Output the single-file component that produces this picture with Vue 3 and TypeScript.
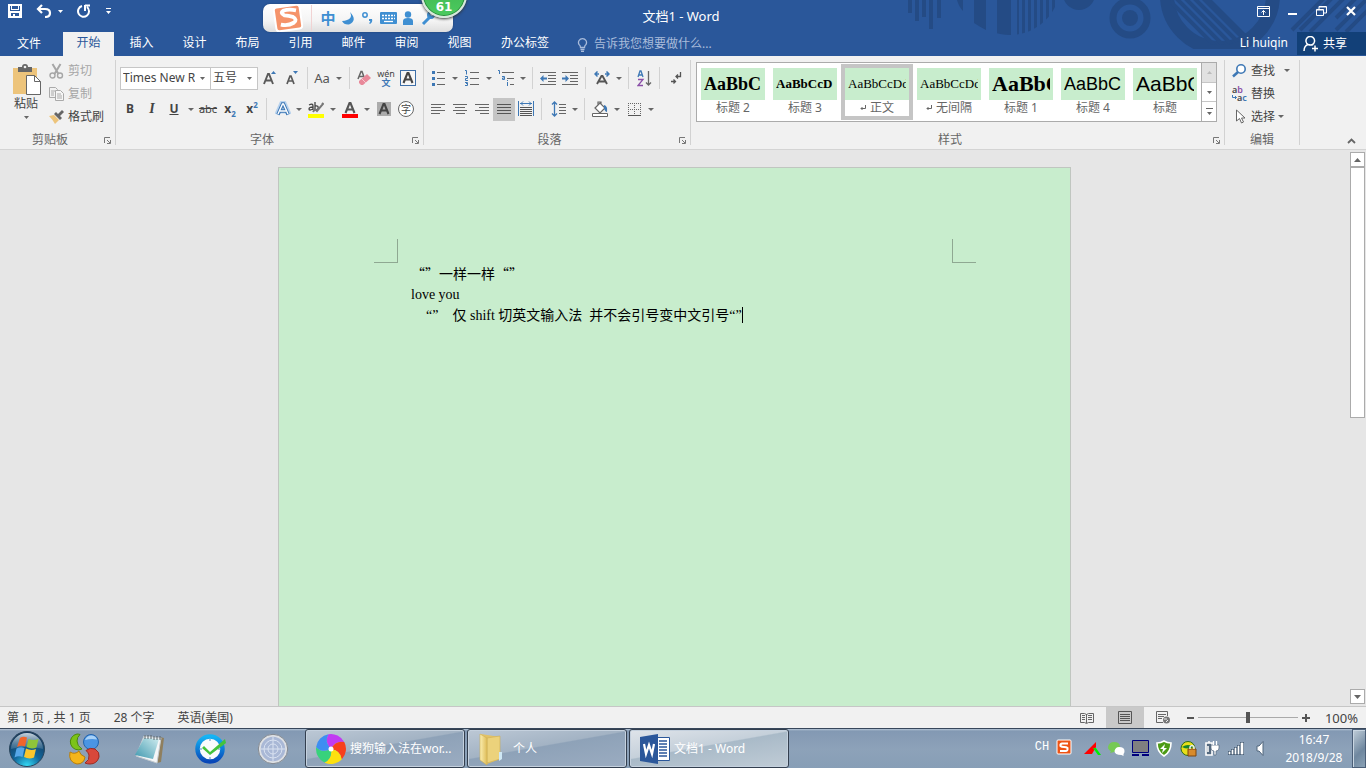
<script setup lang="ts">
import { ref } from 'vue'

interface StylePreset {
  sample: string
  name: string
  look: string
  mark?: boolean
}

const tabs: string[] = ['开始', '插入', '设计', '布局', '引用', '邮件', '审阅', '视图', '办公标签']
const activeTab = ref('开始')
const selectedStyle = ref('正文')
const zoom = ref(50)
const fontName = ref('Times New Roman')
const fontSize = ref('五号')
const query = ref('')
const lastLine = '“”    仅 shift 切英文输入法  并不会引号变中文引号“”'

const presets: StylePreset[] = [
  { sample: 'AaBbC', name: '标题 2', look: 'look-h2' },
  { sample: 'AaBbCcD', name: '标题 3', look: 'look-h3' },
  { sample: 'AaBbCcDd', name: '正文', look: 'look-body', mark: true },
  { sample: 'AaBbCcDd', name: '无间隔', look: 'look-body', mark: true },
  { sample: 'AaBbC', name: '标题 1', look: 'look-h1' },
  { sample: 'AaBbC', name: '标题 4', look: 'look-h4' },
  { sample: 'AaBbC', name: '标题', look: 'look-title' },
]
</script>

<template>
  <div class="app">
    <header class="head">
      <svg class="deco" width="470" height="56" viewBox="896 0 470 56" aria-hidden="true">
        <defs>
          <clipPath id="discA"><circle cx="1010" cy="-15" r="50" /></clipPath>
          <clipPath id="discB"><circle cx="1220" cy="-5" r="50" /></clipPath>
          <clipPath id="flat"><rect x="1150" y="0" width="216" height="49" /></clipPath>
        </defs>
        <g fill="#244b85">
          <path d="M908 0h4v13h-4zM915 0h4v21h-4zM922 0h4v17h-4zM929 0h4v29h-4zM937 0h4v18h-4z" />
          <path d="M957 0h6v11q-4-4-6-11zM974 0h12v30q-6-3-12-7z" />
          <g clip-path="url(#discA)">
            <path d="M997 0h14v40h-14zM1017 0h2v40h-2zM1022 0h3v40h-3zM1028 0h3v40h-3zM1034 0h3v40h-3zM1040 0h3v40h-3zM1046 0h3v40h-3zM1052 0h3v40h-3z" />
          </g>
          <circle cx="1079" cy="-6" r="16" />
          <circle cx="1130" cy="18" r="8" />
        </g>
        <circle cx="1130" cy="18" r="17" fill="none" stroke="#244b85" stroke-width="7" />
        <g clip-path="url(#flat)">
          <circle cx="1220" cy="-5" r="53" fill="none" stroke="#244b85" stroke-width="14" />
          <g clip-path="url(#discB)">
            <path d="M1165-4l56 56M1174-4l56 56M1183-4l56 56M1192-4l56 56" stroke="#244b85" stroke-width="4" />
            <path d="M1203-4l56 56" stroke="#244b85" stroke-width="7" />
          </g>
          <path d="M1292 30l34-34M1300 30l36-36M1310 32l44-44M1336 18l30-30M1336 30l30-30M1346 32l24-24" stroke="#244b85" stroke-width="4" />
        </g>
      </svg>

      <div class="titlebar">
        <div class="quick">
          <button class="qbtn" aria-label="保存">
            <svg width="14" height="14" viewBox="0 0 14 14"><path d="M0 0h14v14H0z" fill="#fff" /><path d="M2 2h1v4h8V2h1v5H2zM3 9h8v3H7v-2H5v2H3z" fill="#2a579a" /><path d="M4 2h6v3H4z" fill="#2a579a" /></svg>
          </button>
          <button class="qbtn undo" aria-label="撤消">
            <svg width="16" height="14" viewBox="0 0 16 14"><path d="M6 1L2 5l4 4M2 5h7q5 0 5 4t-5 4" fill="none" stroke="#fff" stroke-width="2.200" /></svg>
          </button>
          <button class="qcaret" aria-label="撤消选项"><svg width="5" height="3" viewBox="0 0 5 3"><path d="M0 0h5L2.500 3z" fill="#fff" /></svg></button>
          <button class="qbtn" aria-label="重做">
            <svg width="14" height="14" viewBox="0 0 14 14"><path d="M5 2a5.500 5.500 0 1 0 5 1M8 1v6M8 1.500h5" fill="none" stroke="#fff" stroke-width="2" /></svg>
          </button>
          <button class="qbtn" aria-label="自定义快速访问工具栏">
            <svg width="5" height="7" viewBox="0 0 5 7"><path d="M0 0h5v1H0zM0 3h5L2.500 6z" fill="#fff" /></svg>
          </button>
        </div>
        <h1 class="title">文档1 - Word</h1>
        <div class="winbtns">
          <button aria-label="功能区显示选项"><svg width="13" height="11" viewBox="0 0 13 11"><path d="M.5.500h12v10H.500zM.5 2.500h12M6.500 9V4.500M4.500 6.500l2-2 2 2" fill="none" stroke="#fff" /></svg></button>
          <button aria-label="最小化"><svg width="9" height="11" viewBox="0 0 9 11"><path d="M0 7h9v2H0z" fill="#fff" /></svg></button>
          <button aria-label="还原"><svg width="11" height="10" viewBox="0 0 11 10"><path d="M.5 3.500h7v6h-7zM.5 4h7M3 3V.500h7.500V7H8M3 1h7" fill="none" stroke="#fff" /></svg></button>
          <button aria-label="关闭"><svg width="10" height="10" viewBox="0 0 10 10"><path d="M1 1l8 8M9 1L1 9" stroke="#fff" stroke-width="2.200" /></svg></button>
        </div>
      </div>

      <nav class="tabs">
        <button class="tab file">文件</button>
        <button v-for="t in tabs" :key="t" class="tab" :class="{ active: t === activeTab }" @click="activeTab = t">{{ t }}</button>
        <label class="tell">
          <svg width="11" height="15" viewBox="0 0 11 15"><path d="M3.500 10.500q0-2-1.500-3a4 4 0 1 1 7 0q-1.500 1-1.500 3zM3.500 12.500h4M4 14.500h3" fill="none" stroke="#a9bcdb" stroke-width="1.300" /></svg>
          <input v-model="query" type="text" aria-label="告诉我您想要做什么" placeholder="告诉我您想要做什么..." />
        </label>
        <a class="user" href="#">Li huiqin</a>
        <button class="share">
          <svg width="16" height="16" viewBox="0 0 16 16"><path d="M1 15q0-5 4-6.500A4.300 4.300 0 1 1 9.500 8.500M5 8.500q3 1 5 0M9 12.500h6M12 9.500v6" fill="none" stroke="#fff" stroke-width="1.500" /></svg>
          共享
        </button>
      </nav>
    </header>

    <aside class="ime" aria-label="搜狗输入法">
      <svg class="ime-logo" width="30" height="28" viewBox="0 0 30 28"><g transform="rotate(-8 15 14)"><rect x="2" y="2" width="26" height="24" rx="3" fill="#f5936a" stroke="#fff" stroke-width="2" /><path d="M24 7.500q-7-2.500-12-1.500-5 2 0 5 4 1 8 2.500 4.500 3.500 0 6-6 2.500-13 0" fill="none" stroke="#fff" stroke-width="3.800" /></g></svg>
      <span class="ime-line"></span>
      <span class="ime-cn">中</span>
      <svg width="20" height="18" viewBox="0 0 20 18"><path d="M12 3q4 8-8 9 2 4 7 3.500 9-4 1-12.500z" fill="#3f8fd2" /></svg>
      <svg width="20" height="18" viewBox="0 0 20 18"><circle cx="7" cy="6" r="2.200" fill="none" stroke="#3f8fd2" stroke-width="1.500" /><path d="M11 10h3q1 3-2 5l-1-1q2-1 1-2h-1z" fill="#3f8fd2" /></svg>
      <svg width="20" height="18" viewBox="0 0 20 18"><rect x="2" y="3" width="17" height="12" rx="1" fill="#3f8fd2" /><path d="M4 6.500h13M4 9.500h13" stroke="#fff" stroke-width="1.500" stroke-dasharray="2 1" /><path d="M6 12.500h9" stroke="#fff" stroke-width="1.300" /></svg>
      <svg width="20" height="18" viewBox="0 0 20 18"><circle cx="10" cy="5.500" r="3.200" fill="#3f8fd2" /><path d="M5 12q0-3 5-3t5 3v4H5z" fill="#3f8fd2" /></svg>
      <svg width="20" height="18" viewBox="0 0 20 18"><path d="M5 15l7-7" stroke="#3f8fd2" stroke-width="3" /><path d="M14 2q-5 0-5 4 0 4 4 4 4 0 4-5l-3 2-2-2z" fill="#3f8fd2" /></svg>
      <span class="ball">61</span>
    </aside>

    <section class="ribbon" aria-label="功能区">
      <div class="group g-clip">
        <div class="clip-body">
          <button class="paste">
            <svg width="29" height="31" viewBox="0 0 29 31"><path d="M1 4h24v26H1z" fill="#edc47b" /><path d="M6 8V3h4q0-3 3-3t3 3h4v5z" fill="#666" /><circle cx="13" cy="3" r="1.300" fill="#f1f1f1" /><path d="M14.500 11.500h8l6 6v13h-14z" fill="#fff" stroke="#666" /><path d="M22.500 11.500v6h6" fill="none" stroke="#666" /></svg>
            <span>粘贴</span>
            <svg width="5" height="3" viewBox="0 0 5 3"><path d="M0 0h5L2.500 3z" fill="#666" /></svg>
          </button>
          <div class="clip-side">
            <button class="side dim"><svg width="15" height="16" viewBox="0 0 15 16"><path d="M3.500 1l6 10M11.500 1l-6 10" stroke="#a6a6a6" stroke-width="2" /><circle cx="3.500" cy="12.500" r="2.500" fill="none" stroke="#a6a6a6" stroke-width="1.400" /><circle cx="11" cy="12.500" r="2.500" fill="none" stroke="#a6a6a6" stroke-width="1.400" /></svg>剪切</button>
            <button class="side dim"><svg width="15" height="14" viewBox="0 0 15 14"><path d="M.5.500h6l2 2v8h-8zM2 4h4M2 6h3M2 8h3" fill="none" stroke="#aaa" /><path d="M6.500 3.500h5l3 3v7h-8z" fill="#f6f6f6" stroke="#aaa" /><path d="M8 7h4M8 9h5M8 11h5" stroke="#aaa" /></svg>复制</button>
            <button class="side"><svg width="15" height="14" viewBox="0 0 15 14"><path d="M0 6l5-1 5 5-4 4q-2-4-6-8z" fill="#edc47b" /><path d="M5 4l2-2 2 2 4-4 2 2-4 4 2 2-2 2z" fill="#666" /></svg>格式刷</button>
          </div>
        </div>
        <div class="cap"><span>剪贴板</span><button class="launch" aria-label="剪贴板选项"><svg width="7" height="7" viewBox="0 0 7 7"><path d="M.5 6V.500H6M3 3l3 3M6.500 3v3.500H3" fill="none" stroke="#777" /></svg></button></div>
      </div>

      <div class="group g-font">
        <div class="rows">
          <div class="row">
            <span class="combo name"><select v-model="fontName" aria-label="字体"><option>Times New Roman</option><option>宋体</option></select><svg width="5" height="3" viewBox="0 0 5 3"><path d="M0 0h5L2.500 3z" fill="#666" /></svg></span>
            <span class="combo size"><select v-model="fontSize" aria-label="字号"><option>五号</option><option>四号</option></select><svg width="5" height="3" viewBox="0 0 5 3"><path d="M0 0h5L2.500 3z" fill="#666" /></svg></span>
            <button class="t" aria-label="增大字号"><svg width="14" height="16" viewBox="0 0 14 16"><path d="M1 14L5 4h1l4 10M2.500 10.500h6" fill="none" stroke="#595959" stroke-width="1.900" /><path d="M8 4l2.500-3L13 4z" fill="#3e78b5" /></svg></button>
            <button class="t" aria-label="减小字号"><svg width="14" height="16" viewBox="0 0 14 16"><path d="M2 14l3-8h1l3 8M3 11h5" fill="none" stroke="#595959" stroke-width="1.700" /><path d="M8 1h5l-2.500 3z" fill="#3e78b5" /></svg></button>
            <i class="sep"></i>
            <button class="t aa" aria-label="更改大小写">Aa</button>
            <button class="dd" aria-label="大小写选项"></button>
            <i class="sep"></i>
            <button class="t" aria-label="清除所有格式"><svg width="16" height="16" viewBox="0 0 16 16"><path d="M2 9l3-7.500h1L8 7M3.500 6.500h4" fill="none" stroke="#666" stroke-width="1.500" /><path d="M3 11l8-7 4 4-8 7H5l-2-2z" fill="#e8899a" /><path d="M6 9l4 4" stroke="#f7c8d0" /></svg></button>
            <button class="t wen" aria-label="拼音指南"><span>wén</span><b>文</b></button>
            <button class="t" aria-label="字符边框"><svg width="16" height="16" viewBox="0 0 16 16"><rect x=".5" y=".5" width="15" height="15" fill="#f6f6f6" stroke="#3e6fa8" /><path d="M3.500 13L7.500 3h1l4 10M5 9.500h6" fill="none" stroke="#444" stroke-width="2.100" /></svg></button>
          </div>
          <div class="row">
            <button class="t bold">B</button>
            <button class="t ital">I</button>
            <button class="t under">U</button>
            <button class="dd" aria-label="下划线选项"></button>
            <button class="t strike">abc</button>
            <button class="t sc">x<sub>2</sub></button>
            <button class="t sc">x<sup>2</sup></button>
            <i class="sep"></i>
            <button class="t fx" aria-label="文本效果"><svg width="16" height="16" viewBox="0 0 16 16"><path d="M2 13.500L7 2h2l5 11.500M4 10h8" fill="none" stroke="#b9d3ee" stroke-width="5" stroke-linejoin="round" /><path d="M3 13.500L7.500 3h1L13 13.500M5 10h6" fill="none" stroke="#3e78b5" stroke-width="3.500" /><path d="M3 13L7.500 3h1L13 13M5 10h6" fill="none" stroke="#fff" stroke-width="1.400" /></svg></button>
            <button class="dd" aria-label="文本效果选项"></button>
            <button class="t" aria-label="突出显示"><svg width="16" height="17" viewBox="0 0 16 17"><path d="M1 4q4-2 4 1v4M5 6Q1 6 1 8t4 0M7 1v8M7 5q4-1 3 3l-3 1" fill="none" stroke="#444" stroke-width="1.300" /><path d="M5 11l2-3 2 2 6-7-1-1" fill="none" stroke="#777" stroke-width="2" /><path d="M0 13h16v4H0z" fill="#ff0" /></svg></button>
            <button class="dd" aria-label="突出显示选项"></button>
            <button class="t" aria-label="字体颜色"><svg width="16" height="17" viewBox="0 0 16 17"><path d="M3.500 12L7.500 2h1l4 10M5 8.500h6" fill="none" stroke="#555" stroke-width="2.100" /><path d="M0 13h16v4H0z" fill="#f00" /></svg></button>
            <button class="dd" aria-label="字体颜色选项"></button>
            <button class="t" aria-label="字符底纹"><svg width="14" height="14" viewBox="0 0 14 14"><path d="M0 0h14v14H0z" fill="#acacac" /><path d="M2.500 12l4-10h1l4 10M4 8.500h6" fill="none" stroke="#444" stroke-width="2.100" /></svg></button>
            <button class="t" aria-label="带圈字符"><span class="ring">字</span></button>
          </div>
        </div>
        <div class="cap"><span>字体</span><button class="launch" aria-label="字体选项"><svg width="7" height="7" viewBox="0 0 7 7"><path d="M.5 6V.500H6M3 3l3 3M6.500 3v3.500H3" fill="none" stroke="#777" /></svg></button></div>
      </div>

      <div class="group g-para">
        <div class="rows">
          <div class="row">
            <button class="t" aria-label="项目符号"><svg width="14" height="16" viewBox="0 0 14 16"><path d="M1 1h3v3H1zM1 7h3v3H1zM1 13h3v3H1z" fill="#3e78b5" /><path d="M6 2.500h8M6 8.500h8M6 14.500h8" stroke="#666" /></svg></button>
            <button class="dd" aria-label="项目符号选项"></button>
            <button class="t" aria-label="编号"><svg width="14" height="16" viewBox="0 0 14 16"><path d="M0 .500h1.500v4M0 6.500h2.500v2H.500v2H3M0 12.500h2.500v3H0M1 13.500h1" fill="none" stroke="#3e78b5" /><path d="M5 2.500h9M5 8.500h9M5 14.500h9" stroke="#666" /></svg></button>
            <button class="dd" aria-label="编号选项"></button>
            <button class="t" aria-label="多级列表"><svg width="17" height="16" viewBox="0 0 17 16"><path d="M0 .500h1.500V4M4 6.500h2.500v3H4.500v-1.500h2M9.500 10v1M9.500 12v4" fill="none" stroke="#3e78b5" /><path d="M4 2.500h12M9 8.500h7M12 14.500h4" stroke="#666" /></svg></button>
            <button class="dd" aria-label="多级列表选项"></button>
            <i class="sep"></i>
            <button class="t" aria-label="减少缩进量"><svg width="16" height="13" viewBox="0 0 16 13"><path d="M0 .500h16M8 3.500h8M8 6.500h8M8 9.500h8M0 12.500h16" stroke="#666" /><path d="M0 6.500l3.500-3.500V5.500H7v2H3.500V10z" fill="#3e78b5" /></svg></button>
            <button class="t" aria-label="增加缩进量"><svg width="16" height="13" viewBox="0 0 16 13"><path d="M0 .500h16M8 3.500h8M8 6.500h8M8 9.500h8M0 12.500h16" stroke="#666" /><path d="M7 6.500L3.500 3v2.500H0v2h3.500V10z" fill="#3e78b5" /></svg></button>
            <i class="sep wide"></i>
            <button class="t" aria-label="中文版式"><svg width="16" height="14" viewBox="0 0 16 14"><path d="M3 13L7.500 5h1L13 13M5 10.500h6" fill="none" stroke="#555" stroke-width="1.900" /><path d="M5 3H1m2.500-2.500L1 3l2.500 2.500M11 3h4m-2.500-2.500L15 3l-2.500 2.500" fill="none" stroke="#3e78b5" stroke-width="1.500" /></svg></button>
            <button class="dd" aria-label="中文版式选项"></button>
            <i class="sep"></i>
            <button class="t" aria-label="排序"><svg width="15" height="17" viewBox="0 0 15 17"><path d="M1 7l2-6h1l2 6M2 5h3" fill="none" stroke="#3e78b5" stroke-width="1.300" /><path d="M1 9.500h5l-5 6h5" fill="none" stroke="#8a4fa8" stroke-width="1.300" /><path d="M11.500 1v14M9 12.500l2.500 2.500 2.500-2.500" fill="none" stroke="#666" stroke-width="1.300" /></svg></button>
            <i class="sep wide"></i>
            <button class="t" aria-label="显示编辑标记"><svg width="11" height="13" viewBox="0 0 11 13"><path d="M9.500 0v4.500H5M7 2.500l-2 2 2 2M0 9.500h4.500M2.500 7.500l2 2-2 2" fill="none" stroke="#555" stroke-width="1.300" /></svg></button>
          </div>
          <div class="row">
            <button class="t" aria-label="左对齐"><svg width="14" height="10" viewBox="0 0 14 10"><path d="M0 .500h14M0 3.500h10M0 6.500h14M0 9.500h9" stroke="#666" /></svg></button>
            <button class="t" aria-label="居中"><svg width="14" height="10" viewBox="0 0 14 10"><path d="M0 .500h14M2 3.500h10M0 6.500h14M3 9.500h9" stroke="#666" /></svg></button>
            <button class="t" aria-label="右对齐"><svg width="14" height="10" viewBox="0 0 14 10"><path d="M0 .500h14M4 3.500h10M0 6.500h14M5 9.500h9" stroke="#666" /></svg></button>
            <button class="t pressed" aria-label="两端对齐"><svg width="14" height="10" viewBox="0 0 14 10"><path d="M0 .500h14M0 3.500h14M0 6.500h14M0 9.500h14" stroke="#555" /></svg></button>
            <button class="t" aria-label="分散对齐"><svg width="16" height="16" viewBox="0 0 16 16"><path d="M.5 0v15M15.500 0v15M2 2.500h12M5 .500l-2 2 2 2M11 .500l2 2-2 2" fill="none" stroke="#3e78b5" /><path d="M2 6.500h12M2 8.500h12M2 10.500h12M2 12.500h12M2 14.500h12" stroke="#555" /></svg></button>
            <i class="sep wide"></i>
            <button class="t" aria-label="行距"><svg width="15" height="16" viewBox="0 0 15 16"><path d="M3.500 1v14M1 3.500L3.500 1 6 3.500M1 12.500L3.500 15 6 12.500" fill="none" stroke="#3e78b5" stroke-width="1.300" /><path d="M8 3.500h7M8 6.500h7M8 9.500h7M8 12.500h7" stroke="#666" /></svg></button>
            <button class="dd" aria-label="行距选项"></button>
            <i class="sep"></i>
            <button class="t" aria-label="底纹"><svg width="17" height="16" viewBox="0 0 17 16"><path d="M3 7l5-5 5 5-5 5zM6 5V1h3v3" fill="#fff" stroke="#666" stroke-width="1.200" /><path d="M12 4q4 1 3 7-2 0-3-4z" fill="#3e78b5" /><path d="M.5 12.500h15v3H.500z" fill="#fff" stroke="#666" /></svg></button>
            <button class="dd" aria-label="底纹选项"></button>
            <button class="t" aria-label="边框"><svg width="13" height="13" viewBox="0 0 13 13"><path d="M0 .500h13M0 6.500h13M.5 0v12M6.500 0v12M12.500 0v12" fill="none" stroke="#666" stroke-dasharray="1 1" /><path d="M0 12.500h13" stroke="#555" /></svg></button>
            <button class="dd" aria-label="边框选项"></button>
          </div>
        </div>
        <div class="cap"><span>段落</span><button class="launch" aria-label="段落选项"><svg width="7" height="7" viewBox="0 0 7 7"><path d="M.5 6V.500H6M3 3l3 3M6.500 3v3.500H3" fill="none" stroke="#777" /></svg></button></div>
      </div>

      <div class="group g-style">
        <div class="gallery">
          <button v-for="p in presets" :key="p.name" class="preset" :class="{ chosen: p.name === selectedStyle }" @click="selectedStyle = p.name">
            <span class="sample" :class="p.look"><span>{{ p.sample }}</span></span>
            <span class="pname"><svg v-if="p.mark" width="6" height="6" viewBox="0 0 6 6"><path d="M5.500 0v3.500H1M2.500 2L1 3.500 2.500 5" fill="none" stroke="#666" /></svg>{{ p.name }}</span>
          </button>
          <div class="gscroll">
            <button class="off" aria-label="上一行"><svg width="5" height="3" viewBox="0 0 5 3"><path d="M0 3h5L2.500 0z" fill="#bbb" /></svg></button>
            <button aria-label="下一行"><svg width="5" height="3" viewBox="0 0 5 3"><path d="M0 0h5L2.500 3z" fill="#666" /></svg></button>
            <button aria-label="其他样式"><svg width="7" height="7" viewBox="0 0 7 7"><path d="M0 0h7v1H0zM1 4h5L3.500 7z" fill="#666" /></svg></button>
          </div>
        </div>
        <div class="cap"><span>样式</span><button class="launch" aria-label="样式选项"><svg width="7" height="7" viewBox="0 0 7 7"><path d="M.5 6V.500H6M3 3l3 3M6.500 3v3.500H3" fill="none" stroke="#777" /></svg></button></div>
      </div>

      <div class="group g-edit">
        <div class="edit-body">
          <button class="side"><svg width="16" height="14" viewBox="0 0 16 14"><path d="M6 8l-5 4.500" stroke="#3e78b5" stroke-width="2.500" /><circle cx="9" cy="5" r="4.200" fill="#fff" stroke="#3e78b5" stroke-width="1.600" /></svg>查找<i class="arr far"></i></button>
          <button class="side"><span class="abac"><b>a<em>b</em></b><b><svg width="5" height="5" viewBox="0 0 5 5"><path d="M.5 0v2.500h4M3 1l1.500 1.500L3 4" fill="none" stroke="#3e78b5" /></svg>a<u>c</u></b></span>替换</button>
          <button class="side"><svg width="16" height="15" viewBox="0 0 16 15"><path d="M4.500 1v11l3-2.500 2 4.500 2-1-2-4h3.500z" fill="#fff" stroke="#666" /></svg>选择<i class="arr"></i></button>
        </div>
        <div class="cap"><span>编辑</span></div>
      </div>
      <button class="collapse" aria-label="折叠功能区"><svg width="9" height="6" viewBox="0 0 9 6"><path d="M1 5l3.500-3.500L8 5" fill="none" stroke="#666" stroke-width="1.800" /></svg></button>
    </section>

    <main class="work">
      <div class="canvas">
        <article class="page" lang="zh-CN">
          <div class="marks"><i class="mk left"></i><i class="mk right"></i></div>
          <div class="copy">
            <p class="full">“”一样一样“”</p>
            <p>love you</p>
            <p class="indent">{{ lastLine }}<i class="cursor"></i></p>
          </div>
        </article>
      </div>
      <div class="vbar">
        <button aria-label="向上滚动"><svg width="7" height="4" viewBox="0 0 7 4"><path d="M0 4h7L3.500 0z" fill="#666" /></svg></button>
        <div class="track"><div class="thumb"></div></div>
        <button aria-label="向下滚动"><svg width="7" height="4" viewBox="0 0 7 4"><path d="M0 0h7L3.500 4z" fill="#666" /></svg></button>
      </div>
    </main>

    <footer class="status">
      <span>第 1 页 , 共 1 页</span><span>28 个字</span><span>英语(美国)</span>
      <div class="views">
        <button aria-label="阅读视图"><svg width="14" height="12" viewBox="0 0 14 12"><path d="M.5 1.500h4l2 1 2-1h5v9h-5l-2 1-2-1h-4zM6.500 2v9M2 3.500h3M2 5.500h3M2 7.500h3M8 3.500h4M8 5.500h4M8 7.500h4" fill="none" stroke="#666" /></svg></button>
        <button class="on" aria-label="页面视图"><svg width="14" height="13" viewBox="0 0 14 13"><path d="M.5.500h13v12H.500zM2 3.500h10M2 5.500h10M2 7.500h10M2 9.500h10" fill="none" stroke="#555" /></svg></button>
        <button aria-label="Web 版式视图"><svg width="15" height="13" viewBox="0 0 15 13"><path d="M7 11.500H.500V.500h11V5M2 3.500h8M2 5.500h6M2 7.500h4" fill="none" stroke="#666" /><circle cx="10.500" cy="9" r="3.500" fill="#777" /><path d="M8 8h3M10 11l2-2" stroke="#eee" /></svg></button>
      </div>
      <button class="zb" aria-label="缩小"><svg width="7" height="7" viewBox="0 0 7 7"><path d="M0 3h7v2H0z" fill="#555" /></svg></button>
      <input v-model="zoom" class="zoom" type="range" min="0" max="100" aria-label="显示比例" />
      <button class="zb" aria-label="放大"><svg width="8" height="8" viewBox="0 0 8 8"><path d="M0 3h8v2H0zM3 0h2v8H3z" fill="#555" /></svg></button>
      <button class="pct">100%</button>
    </footer>

    <nav class="taskbar" aria-label="任务栏">
      <button class="orb" aria-label="开始菜单">
        <svg width="38" height="38" viewBox="0 0 38 38"><defs><radialGradient id="orbG" cx=".5" cy="1" r=".9"><stop offset="0" stop-color="#35e0fa" /><stop offset=".45" stop-color="#11679c" /><stop offset="1" stop-color="#17395c" /></radialGradient><linearGradient id="orbS" x1="0" y1="0" x2="0" y2="1"><stop offset="0" stop-color="#e6f0f6" stop-opacity=".85" /><stop offset="1" stop-color="#8fb3c9" stop-opacity=".25" /></linearGradient></defs><circle cx="19" cy="19" r="17.500" fill="url(#orbG)" stroke="#29455c" /><path d="M3 19a16 16 0 0 1 32 0q-16-5-32 0z" fill="url(#orbS)" /><path d="M12 8q3-2 7-0.500l-2 9q-4-1.500-8 .5z" fill="#f0652b" /><path d="M20.500 9q5 2 10 0l-2 8.500q-5 2-10-.5z" fill="#8fc43a" /><path d="M8.500 18.500q4-2 8-.5l-2 9q-4-1.500-8 .5z" fill="#56a7e8" /><path d="M18 18.500q5 2.500 10 .5l-2 8.500q-5 2-10-.5z" fill="#fbc62c" /></svg>
      </button>
      <button class="pin first" aria-label="文件管理">
        <svg width="32" height="32" viewBox="0 0 32 32"><path d="M9 1a8 8 0 1 0 5 15q-5-3-5-8 0-4 3-6.500-1-.5-3-.5z" fill="#7cc318" stroke="#4c8b0b" /><circle cx="23" cy="9" r="7.500" fill="#4a95e4" stroke="#2163ae" /><path d="M17 7q2-5 7-4.500 4 .5 5 4-6-1-12 .5z" fill="#a9d1f7" /><path d="M2 19q5 3 9-1 1 4 6 6-1 7-8 7-9-2-7-12z" fill="#f4b51a" stroke="#ba7e08" /><path d="M17 30q5-3 4-8-1-3-3-4.500Q22 14 27 16q5 3 4 8-2 7-9 7-3 0-5-1z" fill="#d9483b" stroke="#9d2b22" /></svg>
      </button>
      <button class="pin" aria-label="记事本">
        <svg width="32" height="32" viewBox="0 0 32 32"><defs><linearGradient id="note" x1="1" y1="0" x2="0" y2="1"><stop offset="0" stop-color="#cfecef" /><stop offset="1" stop-color="#3e97ae" /></linearGradient></defs><path d="M27 4l4 1-3 24-4 1z" fill="#8f7f5e" /><path d="M11 3l17 2-4 25L3 23z" fill="#f4f6f7" stroke="#c4cbd0" /><path d="M11 5l15 1-6 20-18-4z" fill="url(#note)" /><path d="M12 2v4M15 2v4M18 2v4M21 3v4M24 3v4M27 3v4" stroke="#596269" /></svg>
      </button>
      <button class="pin" aria-label="日程">
        <svg width="32" height="32" viewBox="0 0 32 32"><defs><linearGradient id="clk" x1="0" y1="0" x2="0" y2="1"><stop offset="0" stop-color="#15b4f5" /><stop offset="1" stop-color="#0847b8" /></linearGradient></defs><circle cx="15" cy="16" r="12.500" fill="#f9fbfd" stroke="url(#clk)" stroke-width="4.500" /><path d="M15 6v2M15 24v2M5 16h2M23 16h2" stroke="#8ab0d8" stroke-width="1.500" /><path d="M9 13l6 6L30 6l1 4-16 12-8-7z" fill="#43c33c" /></svg>
      </button>
      <button class="pin" aria-label="定位">
        <svg width="32" height="32" viewBox="0 0 32 32"><circle cx="16" cy="16" r="13.500" fill="#a9b8d6" stroke="#dde0e4" stroke-width="2.500" /><circle cx="16" cy="16" r="14.700" fill="none" stroke="#81878f" /><path d="M16 4v24M4 16h24" stroke="#d9e2f1" /><circle cx="16" cy="16" r="9" fill="none" stroke="#d9e2f1" /><circle cx="16" cy="16" r="5" fill="none" stroke="#d9e2f1" /></svg>
      </button>
      <div class="tasks">
        <button class="task">
          <svg width="32" height="32" viewBox="0 0 32 32"><defs><path id="petal" d="M16 16Q9 9 13.400 1.200A15 15 0 0 1 29.200 9Q20.500 7.200 16 16z" /></defs><use href="#petal" fill="#c13bf2" /><use href="#petal" fill="#f8401c" transform="rotate(72 16 16)" /><use href="#petal" fill="#fde10f" transform="rotate(144 16 16)" /><use href="#petal" fill="#38d27c" transform="rotate(216 16 16)" /><use href="#petal" fill="#3d8ef2" transform="rotate(288 16 16)" /><circle cx="16" cy="16" r="2.500" fill="#fff" /></svg>
          <span>搜狗输入法在wor...</span>
        </button>
        <button class="task">
          <svg width="32" height="32" viewBox="0 0 32 32"><defs><linearGradient id="fold" x1="0" y1="0" x2="1" y2="0"><stop offset="0" stop-color="#fbeeb0" /><stop offset="1" stop-color="#dfbd59" /></linearGradient></defs><path d="M4 1l19 3v22l-13 5z" fill="#e2c266" /><path d="M10 5l13-2v23l-13 4z" fill="#ecd27b" stroke="#cfae54" stroke-width=".6" /><path d="M3 1l7 4v27l-7-5z" fill="url(#fold)" stroke="#cfae54" stroke-width=".6" /><path d="M22 19h3v7l-3 2z" fill="#cfe8f5" /></svg>
          <span class="far-text">个人</span>
        </button>
        <button class="task current">
          <svg width="32" height="32" viewBox="0 0 32 32"><path d="M18 4.500h12.500v23H18z" fill="#fff" stroke="#2b579a" /><path d="M20 8h8M20 11h8M20 14h8M20 17h8M20 20h8M20 23h8" stroke="#2b579a" stroke-width="1.400" /><path d="M1 4l18-3v30L1 28z" fill="#2b579a" /><path d="M5 11l2 10 3-9 3 9 2-10" fill="none" stroke="#fff" stroke-width="2.200" /></svg>
          <span>文档1 - Word</span>
        </button>
      </div>
      <div class="tray">
        <button class="lang">CH</button>
        <button class="sogou" aria-label="搜狗拼音"><svg width="16" height="16" viewBox="0 0 16 16"><rect x="1" y="1" width="14" height="14" rx="1" fill="#ee5314" stroke="#fff" /><path d="M12 4.500H6Q4 5 4.500 7q1 1 3.500 1t3.500 1q.5 3-2 3H4" fill="none" stroke="#fff" stroke-width="2" /></svg></button>
        <button aria-label="显卡"><svg width="17" height="14" viewBox="0 0 17 14"><path d="M12 0v5l-4 7H0z" fill="#f00" /><path d="M9 6h3l5 7h-3z" fill="#0e0" /></svg></button>
        <button aria-label="微信"><svg width="17" height="14" viewBox="0 0 17 14"><path d="M6 0q6 0 6 5t-6 5l-4 1 1-2Q0 8 0 5q1-5 6-5z" fill="#76c954" /><path d="M11 5q5.500 0 5.500 4 0 2-1 3v2l-2-1q-7 0-7-4 1-4 4.500-4z" fill="#fff" /></svg></button>
        <button aria-label="显示器"><svg width="17" height="17" viewBox="0 0 17 17"><path d="M.5.500h16v12H.500z" fill="#808080" stroke="#00007c" /><path d="M0 14h7v2H0zM10 14h7v2h-7z" fill="#00007c" /></svg></button>
        <button aria-label="安全卫士"><svg width="16" height="17" viewBox="0 0 16 17"><path d="M8 1q3 2 7 2 0 9-7 13Q1 12 1 3q4 0 7-2z" fill="#4c9b16" stroke="#fff" stroke-width="1.600" /><path d="M9 4L4 9h3l-1 4 5-5H8z" fill="#fff" /></svg></button>
        <button aria-label="加密"><svg width="17" height="16" viewBox="0 0 17 16"><circle cx="8" cy="7.500" r="7" fill="#e8df19" stroke="#2d6b1a" /><path d="M2 6q6-4 12 0-6 3-12 0z" fill="#18842b" /><path d="M8 8h8v7H8z" fill="#d98b2b" stroke="#7b4510" /><path d="M10 8V6q2-3 4 0v2" fill="none" stroke="#eee" stroke-width="1.500" /></svg></button>
        <button aria-label="电源"><svg width="16" height="16" viewBox="0 0 16 16"><path d="M2 2h6v12H2z" fill="#54697f" stroke="#fff" stroke-width="1.600" /><path d="M4 1h2M4 5v6" stroke="#fff" stroke-width="1.500" /><path d="M7 4h8v3q0 3-3 3v4h-2v-4q-3 0-3-3z" fill="#fff" stroke="#54697f" stroke-width=".7" /><path d="M9.500 0v4M12.500 0v4" stroke="#fff" stroke-width="1.300" /></svg></button>
        <button aria-label="网络"><svg width="16" height="13" viewBox="0 0 16 13"><path d="M0 9h3v4H0zM3 7h3v6H3zM6 5h3v8H6zM9 3h3v10H9zM12 0h4v13h-4z" fill="#4e6379" /><path d="M1 10h1v2H1zM4 8h1v4H4zM7 6h1v6H7zM10 4h1v8h-1zM13 1h2v11h-2z" fill="#fff" stroke="#fff" stroke-width=".6" /></svg></button>
        <button aria-label="音量"><svg width="9" height="15" viewBox="0 0 9 15"><path d="M1 5h2l4-4.500v14L3 10H1z" fill="#fff" stroke="#51667d" /></svg></button>
      </div>
      <button class="clock"><span>16:47</span><span>2018/9/28</span></button>
      <button class="peek" aria-label="显示桌面"></button>
    </nav>
  </div>
</template>

<style>
html, body { margin: 0; }
</style>

<style scoped>
.app {
  height: 100vh;
  display: flex;
  flex-direction: column;
  overflow: hidden;
  font: 12px/16px "Noto Sans", "Noto Sans CJK SC", sans-serif;
  color: #444;
  position: relative;
}
button { font: inherit; color: inherit; background: none; border: 0; padding: 0; margin: 0; display: flex; align-items: center; justify-content: center; white-space: nowrap; }
svg { display: block; flex: none; }
i { font-style: normal; }

.head { position: relative; background: #2a579a; color: #fff; flex: none; }
.deco { position: absolute; right: 0; top: 0; }
.titlebar { position: relative; height: 32px; display: grid; grid-template-columns: 1fr auto 1fr; }
.quick { display: flex; align-items: center; height: 22px; padding-left: 3px; }
.qbtn { width: 24px; height: 22px; }
.qbtn.undo { margin-left: 5px; }
.qcaret { width: 8px; height: 22px; margin-right: 8px; }
.title { margin: 0; padding-right: 4px; font-size: 13px; font-weight: 400; line-height: 32px; }
.winbtns { display: flex; justify-content: flex-end; height: 22px; padding-right: 1px; }
.winbtns button { width: 29px; height: 22px; }

.tabs { position: relative; display: flex; height: 24px; }
.tab { width: 51px; margin: 0 1px; height: 24px; padding-bottom: 2px; }
.tab.file { width: 58px; margin: 0 4px 0 0; padding: 0; }
.tab:nth-child(10) { width: 76px; }
.tab.active { background: #f1f1f1; color: #2a579a; }
.tell { display: flex; align-items: center; gap: 6px; flex: 1; margin-left: 13px; }
.tell input { flex: 1; min-width: 0; padding: 0; border: 0; outline: 0; background: none; font: inherit; color: #fff; }
.tell input::placeholder { color: #a9bcdb; opacity: 1; }
.user { color: #fff; text-decoration: none; line-height: 22px; margin-right: 9px; }
.share { background: #124078; width: 69px; height: 23px; gap: 4px; justify-content: flex-start; padding-left: 6px; }

.ime { position: absolute; left: 263px; top: 4px; height: 28px; width: 180px; padding: 0 0 0 10px; border-radius: 7px; background: linear-gradient(#fff, #f4f4f4 60%, #dedede); display: flex; align-items: center; box-shadow: 0 0 2px #1d3f70; }
.ime-line { width: 1px; height: 26px; background: #f1d3d3; margin: 0 6px 0 8px; }
.ime-cn { width: 20px; text-align: center; font: 700 15px/20px "Noto Sans CJK SC", sans-serif; color: #3f8fd2; }
.ball { position: absolute; left: 158px; top: -32px; box-sizing: border-box; width: 46px; height: 46px; border: 2px solid #d9e8dc; border-radius: 50%; background: linear-gradient(#3cae4c, #4ccb5f); box-shadow: inset 0 0 0 1px #278a3b, 0 1px 3px #333; color: #fff; font: 700 12px/14px "DejaVu Sans", sans-serif; display: flex; align-items: flex-end; justify-content: center; padding-bottom: 2px; }

.ribbon { flex: none; display: flex; height: 93px; background: #f1f1f1; border-bottom: 1px solid #d4d4d4; }
.group { margin: 4px 0; height: 85px; border-right: 1px solid #d2d2d2; display: flex; flex-direction: column; justify-content: space-between; box-sizing: border-box; flex: none; }
.g-clip { width: 116px; }
.g-font { width: 308px; }
.g-para { width: 267px; }
.g-style { width: 534px; }
.g-edit { width: 75px; }
.cap { display: flex; align-items: center; height: 10px; padding-right: 1px; color: #666; }
.cap span { flex: 1; text-align: center; line-height: 16px; }
.launch { width: 14px; height: 10px; }
.g-edit .cap { padding: 0; }

.clip-body { display: flex; height: 70px; }
.paste { width: 42px; margin-left: 5px; flex-direction: column; justify-content: flex-start; padding-top: 4px; gap: 0; line-height: 18px; }
.paste span { margin-bottom: 3px; }
.clip-side { margin-left: 2px; }
.side { height: 23px; gap: 4px; padding-bottom: 2px; }
.dim { color: #a6a6a6; }
.rows { display: flex; flex-direction: column; gap: 9px; padding: 7px 0 0 3px; }
.row { display: flex; align-items: center; height: 22px; }
.t { width: 22px; height: 23px; flex: none; }
.dd { width: 12px; height: 22px; flex: none; }
.dd::after, .arr::after { content: ""; border: 3px solid transparent; border-top-color: #666; border-bottom: 0; }
.arr { display: flex; }
.arr.far { margin-left: 6px; }
.sep { width: 1px; height: 22px; margin: 0 4px 0 3px; background: #d2d2d2; flex: none; }
.sep.wide { margin: 0 5px 0 4px; }
.pressed { background: #c5c5c5; }

.g-font .row:first-child { padding-left: 1px; }
.combo { display: flex; align-items: center; box-sizing: border-box; height: 23px; border: 1px solid #c6c6c6; background: #fff; position: relative; padding-right: 15px; flex: none; }
.combo.name { width: 91px; }
.combo.size { width: 47px; border-left: 0; margin-right: 1px; padding-right: 14px; }
.combo select { appearance: none; width: 100%; min-width: 0; border: 0; outline: 0; padding: 0 0 0 2px; background: none; font: inherit; color: #444; overflow: hidden; }
.combo svg { position: absolute; right: 5px; top: 9px; pointer-events: none; }
.g-font .row:first-child .sep { margin: 0 3px 0 4px; }
.aa { font-size: 13px; color: #555; }
.wen { flex-direction: column; font: 9px/9px "Noto Sans", sans-serif; }
.wen b { font: 700 9px/9px "Noto Sans CJK SC", sans-serif; color: #3e78b5; }
.bold { font-weight: 700; }
.ital { font: italic 700 14px/16px "Liberation Serif", serif; }
.under { font-weight: 700; text-decoration: underline; }
.strike { font-size: 11px; text-decoration: line-through; }
.sc { font-weight: 700; font-size: 12px; }
.sc sub, .sc sup { font-size: 8px; line-height: 8px; color: #3e78b5; }
.sc sub { align-self: flex-end; margin-bottom: 3px; }
.sc sup { align-self: flex-start; margin-top: 3px; }
.fx { margin-left: 1px; margin-right: -1px; }
.ring { width: 14px; height: 14px; border: 1px solid #666; border-radius: 50%; background: #fff; font: 10px/13px "Noto Sans CJK SC", sans-serif; text-align: center; }

.gallery { display: flex; margin: 2px 7px 0 5px; height: 58px; border: 1px solid #ababab; background: #fff; }
.preset { width: 72px; flex: none; box-sizing: border-box; height: 56px; margin-top: 1px; border: 4px solid transparent; flex-direction: column; justify-content: flex-start; }
.preset.chosen { border-color: #c5c5c5; }
.sample { width: 64px; box-sizing: border-box; height: 32px; padding: 0 3px; background: #c8edcd; color: #000; flex: none; }
.sample span { display: block; overflow: hidden; text-align: left; line-height: 32px; }
.look-h2 { font: 700 18px "Liberation Serif", serif; }
.look-h3 { font: 700 13px "Liberation Serif", serif; }
.look-body { font: 13px "Liberation Serif", serif; }
.look-h1 { font: 700 22px "Liberation Serif", serif; }
.look-h4 { font: 18px "Liberation Sans", sans-serif; }
.look-title { font: 21px "Liberation Sans", sans-serif; }
.pname { display: flex; align-items: center; gap: 4px; line-height: 16px; color: #666; }
.gscroll { flex: 1; display: flex; flex-direction: column; border-left: 1px solid #ababab; margin-left: auto; }
.gscroll button { flex: 1; border-bottom: 1px solid #c6c6c6; width: 100%; }
.gscroll button:last-child { border-bottom: 0; }
.gscroll .off { background: #e1e1e1; }

.edit-body { padding-left: 7px; }
.edit-body .side { justify-content: flex-start; gap: 3px; }
.abac { width: 16px; display: flex; flex-direction: column; font: 9px/9px "Noto Sans", sans-serif; }
.abac b { display: flex; align-items: center; font-weight: 600; height: 8px; }
.abac em { font-style: normal; color: #8a4fa8; }
.abac u { text-decoration: none; color: #3e78b5; }
.collapse { margin-left: auto; width: 30px; height: 16px; align-self: flex-end; }

.work { flex: 1; min-height: 0; display: flex; background: #e6e6e6; }
.canvas { flex: 1; display: flex; justify-content: center; padding-top: 17px; overflow: hidden; }
.page { width: 791px; border: 1px solid #c0c6c0; background: #c8edcd; min-height: 900px; flex: none; color: #000; }
.marks { display: flex; justify-content: space-between; padding: 71px 94px 0 95px; }
.mk { width: 23px; height: 23px; border: 0 solid #8fa892; border-bottom-width: 1px; }
.mk.left { border-right-width: 1px; }
.mk.right { border-left-width: 1px; }
.copy { padding: 0 118px 0 132px; font: 14px/21px "Liberation Serif", "Noto Sans CJK SC", serif; }
.copy p { margin: 0; white-space: pre; height: 21px; }
.copy .full { font-family: "Noto Sans CJK SC", sans-serif; }
.copy .indent { padding-left: 15px; }
.cursor { display: inline-block; width: 1px; height: 16px; background: #000; vertical-align: -3px; }
.vbar { width: 17px; box-sizing: border-box; padding: 2px 1px; display: flex; flex-direction: column; background: #e6e6e6; }
.vbar button { height: 15px; box-sizing: border-box; border: 1px solid #ababab; background: #fff; flex: none; }
.track { flex: 1; }
.thumb { height: 48%; box-sizing: border-box; border: 1px solid #ababab; background: #fff; }

.status { flex: none; box-sizing: border-box; height: 22px; border-top: 1px solid #c6c6c6; background: #f1f1f1; display: flex; align-items: center; padding: 0 8px 0 7px; }
.status > span { margin-right: 23px; }
.views { display: flex; margin-left: auto; align-self: stretch; }
.views button { width: 38px; }
.views .on { background: #c9c9c9; }
.zb { width: 16px; height: 21px; }
.zoom { appearance: none; width: 100px; height: 12px; margin: 0; background: linear-gradient(#aaa, #aaa) center / 100% 1px no-repeat; }
.zoom::-webkit-slider-thumb { appearance: none; width: 4px; height: 11px; background: #555; }
.pct { width: 34px; margin-left: 10px; justify-content: flex-end; font-size: 13px; }

.taskbar { flex: none; height: 40px; box-sizing: border-box; border-top: 1px solid #38475b; background: linear-gradient(#b5c5d6 0, #8399b3 2px, #8da2b9 20px, #879eb6 100%); display: flex; align-items: stretch; color: #fff; }
.orb { width: 54px; }
.pin { width: 62px; }
.pin.first { width: 60px; margin-right: 4px; }
.tasks { display: flex; gap: 2px; flex: 1; margin-left: 1px; min-width: 0; }
.task { width: 160px; box-sizing: border-box; border: 1px solid #333f4f; border-radius: 3px; box-shadow: inset 0 0 0 1px #c5d1de; background: linear-gradient(170deg, #bcc8d5 0, #a3b3c4 44%, #8ea2b8 46%, #9bacc1 100%); justify-content: flex-start; gap: 3px; padding-left: 9px; }
.task.current { background: linear-gradient(170deg, #dfe4ea 0, #c5d0da 44%, #a9bac8 46%, #c0ccd6 100%); }
.far-text { padding-left: 1px; }
.tray { display: flex; align-items: center; margin-right: 6px; }
.tray button { width: 24px; height: 38px; }
.tray .lang { width: 20px; font: 12px/16px "Liberation Mono", monospace; padding-bottom: 4px; height: 34px; }
.tray .sogou { padding-bottom: 4px; height: 34px; margin-right: 4px; }
.clock { flex-direction: column; line-height: 18px; width: 72px; margin-right: 2px; }
.peek { width: 14px; border: 1px solid #4b5f78; box-shadow: inset 1px 1px 0 #c9d6e2; background: linear-gradient(135deg, #c1ced9, #6f879f 60%, #8ba2b6); }
</style>
